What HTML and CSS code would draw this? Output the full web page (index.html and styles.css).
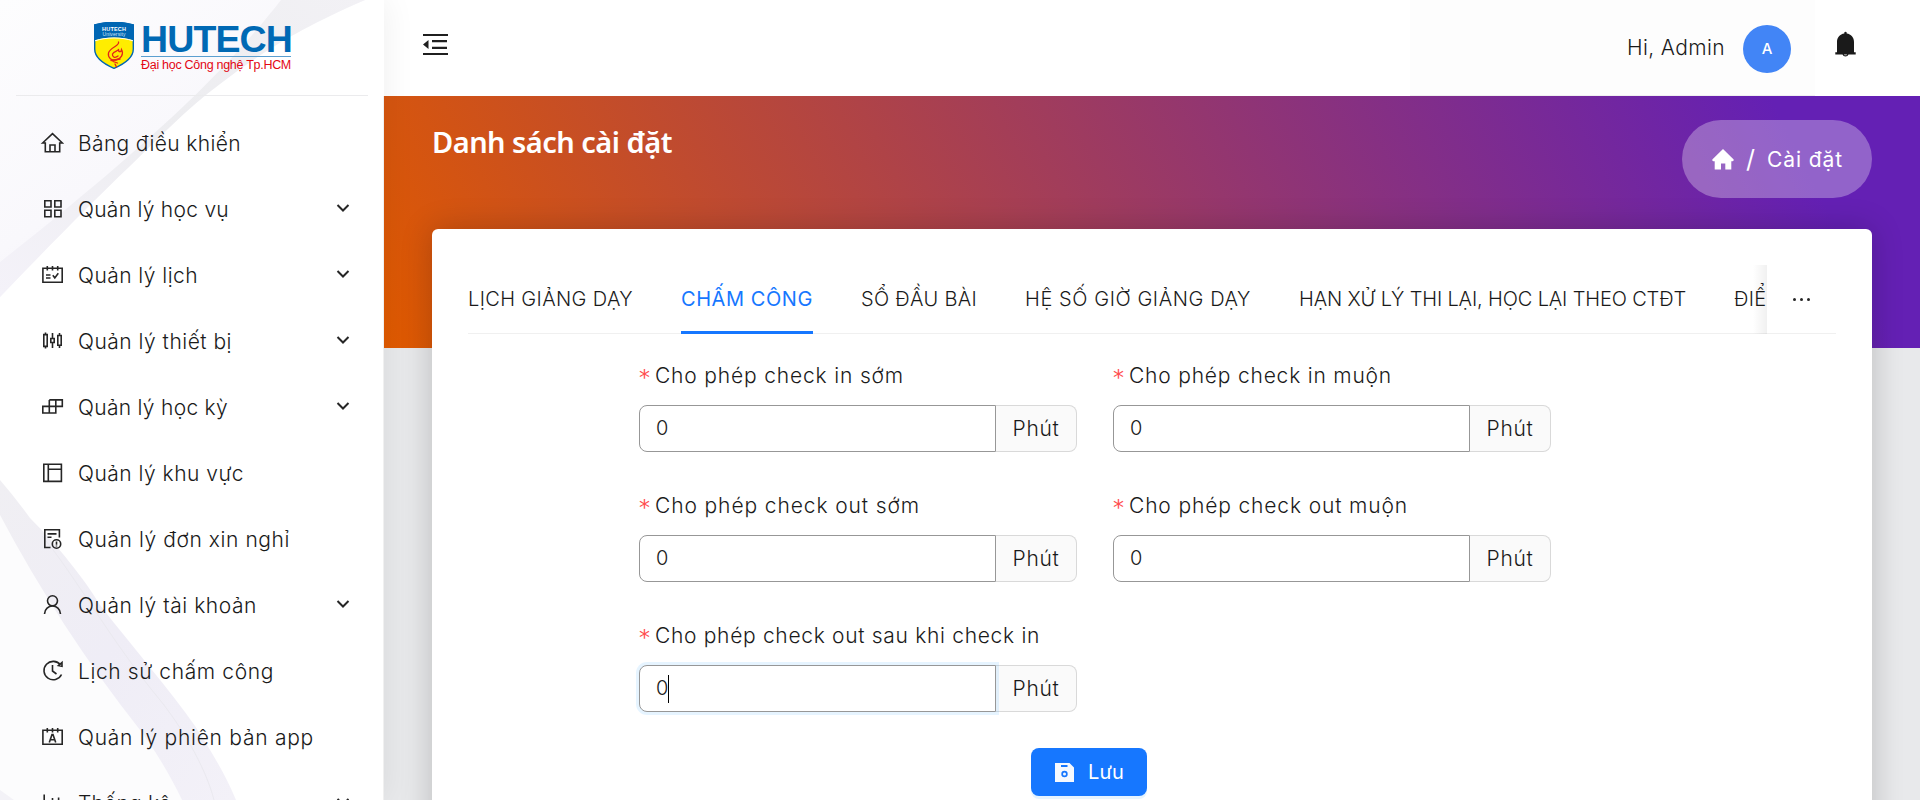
FILE: index.html
```html
<!DOCTYPE html>
<html lang="vi">
<head>
<meta charset="utf-8">
<title>Danh sách cài đặt</title>
<link rel="stylesheet" href="styles.css">
</head>
<body>
<div class="app">
  <aside class="sidebar">
    <svg class="swoosh" viewBox="0 0 384 800" width="384" height="800">
      <defs>
        <linearGradient id="g1" x1="0" y1="0" x2="0.7" y2="0.8">
          <stop offset="0" stop-color="#fdfdfe"/><stop offset=".6" stop-color="#f9f8fc"/><stop offset="1" stop-color="#f0eef6"/>
        </linearGradient>
        <linearGradient id="g2" x1="0" y1="0" x2="1" y2="1">
          <stop offset="0" stop-color="#f0eff3"/><stop offset=".5" stop-color="#efedf6"/><stop offset="1" stop-color="#f3f1f8"/>
        </linearGradient>
        <linearGradient id="g3" x1="1" y1="0" x2="0" y2="1">
          <stop offset="0" stop-color="#f2f1f5"/><stop offset=".45" stop-color="#ededf0"/><stop offset="1" stop-color="#f4f2f9"/>
        </linearGradient>
      </defs>
      <path fill="url(#g1)" d="M0 0H365C300 28 262 52 220 84C185 110 160 137 130 166C90 204 50 245 0 297Z"/>
      <path fill="url(#g3)" d="M281 0H365C300 28 262 52 220 84C185 110 160 137 130 166C90 204 50 245 0 297V262C60 215 120 165 160 128C205 88 250 40 281 0Z"/>
      <path fill="#fcfcfd" d="M0 515C35 575 70 640 140 730C155 750 170 775 182 800H0Z"/>
      <path fill="url(#g2)" d="M0 480C10 492 20 504 30 518C60 548 85 580 100 605C135 650 170 690 195 726C212 752 226 776 236 800H182C170 775 155 750 140 730C85 660 40 590 0 515Z"/>
      <path fill="none" stroke="#eae9ef" d="M42 536C75 575 110 640 160 700C180 725 205 765 214 800"/>
      <path fill="#f3f2f7" d="M0 790L14 800H0Z"/>
    </svg>
    <div class="brand">
      <svg class="shield" viewBox="0 0 40 47" width="40" height="47">
        <path d="M.7 3C12-.6 28-.6 39.300 3V27C39.300 37 29 42.500 20 46.300C11 42.500.7 37 .7 27Z" fill="#ffed00" stroke="#0066b3" stroke-width="1.400"/>
        <path d="M0 2.500C12-.8 28-.8 40 2.500V18.500C28 14.500 12 14.500 0 18.500Z" fill="#0066b3"/>
        <path d="M1 18.800C12 15 28 15 39 18.800" fill="none" stroke="#fff" stroke-width="1"/>
        <g fill="none" stroke="#e2231a" stroke-width="1.300" stroke-linecap="round"><path d="M24.500 20C26 24 16 25 14.500 31C13.500 36 18 39 22 38C27 37 30 32 27.500 27.500C27 31 24 30 24.500 27C25 29 20 29 18.500 32C18 35 21 36.500 24 34"/><path d="M17 38.500L26 37M19 39.500L23.500 41M21 42L22.500 45"/></g>
        <text x="20" y="8.600" text-anchor="middle" textLength="24" class="sh1">HUTECH</text>
        <text x="20" y="13.800" text-anchor="middle" textLength="23" class="sh2">University</text>
      </svg>
      <div class="brandtext"><span class="bname" data-w="151">HUTECH</span><span class="bsub" data-w="150">Đại học Công nghệ Tp.HCM</span></div>
    </div>
    <nav class="menu">
      <a class="item"><svg class="ic"><path d="M2.600 12L12.500 2.600L22.400 12H19.700V20.700H5.300V12Z M10 20.700V14H15V20.700"/></svg><span data-w="163">Bảng điều khiển</span></a>
      <a class="item"><svg class="ic"><path d="M4.800 3.800H11V10H4.800ZM14.800 3.800H21V10H14.800ZM4.800 13.300H11V19.700H4.800ZM14.800 13.300H21V19.700H14.800Z"/></svg><span data-w="151">Quản lý học vụ</span><svg class="chev"><path d="M1.500 2L7 7.500L12.500 2"/></svg></a>
      <a class="item"><svg class="ic"><path d="M2.900 5.300H22.200V19.200H2.900ZM7.300 3V7.500M12.500 3V7.500M17.700 3V7.500M6 12H10.500M6 15H10.500M12.800 12.300L14.800 15L18.300 10.300"/></svg><span data-w="120">Quản lý lịch</span><svg class="chev"><path d="M1.500 2L7 7.500L12.500 2"/></svg></a>
      <a class="item"><svg class="ic"><path d="M3.800 5.600H7.200V17.400H3.800ZM5.500 3.400V5.600M5.500 17.400V19.600M12.500 4V9.500M12.500 13.500V19M10.800 9.500H14.200V13.500H10.800ZM17.800 6.500H21.200V16.300H17.800ZM19.500 4V6.500M19.500 16.300V19"/></svg><span data-w="154">Quản lý thiết bị</span><svg class="chev"><path d="M1.500 2L7 7.500L12.500 2"/></svg></a>
      <a class="item"><svg class="ic"><path d="M9.300 4.900H22.300V11.400H2.800V18H15.800V4.900M9.300 4.900V18"/></svg><span data-w="150">Quản lý học kỳ</span><svg class="chev"><path d="M1.500 2L7 7.500L12.500 2"/></svg></a>
      <a class="item"><svg class="ic"><path d="M3.800 3.200H21.400V20.400H3.800ZM8.300 3.200V20.400M8.300 8.300H21.400"/></svg><span data-w="166">Quản lý khu vực</span></a>
      <a class="item"><svg class="ic"><path d="M10.500 20.500H4.800V2.700H19.400V10.500M7.500 6.900H16.500M7.500 10.300H11.500"/><circle cx="16.500" cy="17" r="4.200"/><path d="M16.500 14.500V17.800M16.500 18.500V19.500"/></svg><span data-w="212">Quản lý đơn xin nghỉ</span></a>
      <a class="item"><svg class="ic"><circle cx="12.500" cy="7.800" r="5"/><path d="M4.500 21C4.700 16 8.500 13 12.500 13S20.300 16 20.500 21"/></svg><span data-w="179">Quản lý tài khoản</span><svg class="chev"><path d="M1.500 2L7 7.500L12.500 2"/></svg></a>
      <a class="item"><svg class="ic"><path d="M21.500 15.500A9.200 9.200 0 1 1 20.500 6M12.500 6V12L16.500 15M22 3.500V7.200L18.500 6.500Z"/></svg><span data-w="196">Lịch sử chấm công</span></a>
      <a class="item"><svg class="ic"><path d="M2.900 5.300H22.200V19.200H2.900ZM7.300 3V7.500M12.500 3V7.500M17.700 3V7.500M9.300 17.500L12 9.500H13L15.700 17.500M10.300 14.700H14.700"/></svg><span data-w="236">Quản lý phiên bản app</span></a>
      <a class="item"><svg class="ic"><path d="M4.200 3.500V21H22M8.500 17V12M12.500 17V7M15.500 17V9M18.600 17V6.500"/></svg><span data-w="93">Thống kê</span><svg class="chev"><path d="M1.500 2L7 7.500L12.500 2"/></svg></a>
    </nav>
  </aside>
  <div class="main">
    <header class="header">
      <svg class="fold" viewBox="0 0 25 22" width="25" height="22"><path d="M0 0H25V2H0ZM9 6H24V8.200H9ZM9 12.800H24V15H9ZM0 19H25V21H0ZM0 10.500L5.500 6V15Z"/></svg>
      <div class="user"><span class="hi" data-w="98">Hi, Admin</span><span class="avatar">A</span></div>
      <svg class="bell" viewBox="0 0 21 27" width="21" height="27"><path d="M9.300 1.500A1.300 1.300 0 0 1 11.700 1.500V2.600C16 3.200 19 6.500 19 11V21.200H20.700V23.500H13.500A3.200 3.200 0 0 1 7.500 23.500H.3V21.200H2V11C2 6.500 5 3.200 9.300 2.600Z"/><path d="M8.900 23.500A1.800 1.600 0 0 0 12.100 23.500Z" fill="#fff"/></svg>
    </header>
    <section class="band">
      <h1 class="title" data-w="240">Danh sách cài đặt</h1>
      <div class="crumb"><svg viewBox="0 0 22 21" width="22" height="21"><path d="M11 0L21.700 10.600Q22 12 20.500 12.300H19.300V20.500H13.300V14.500H9V20.500H2.700V12.300H1.300Q0 12 .3 10.600Z"/></svg><span class="slash">/</span><span class="here" data-w="76">Cài đặt</span></div>
    </section>
    <section class="card">
      <div class="tabs">
        <div class="tablist">
          <span class="tab" data-w="165">LỊCH GIẢNG DẠY</span>
          <span class="tab on" data-w="132">CHẤM CÔNG</span>
          <span class="tab" data-w="116">SỔ ĐẦU BÀI</span>
          <span class="tab" data-w="226">HỆ SỐ GIỜ GIẢNG DẠY</span>
          <span class="tab" data-w="387">HẠN XỬ LÝ THI LẠI, HỌC LẠI THEO CTĐT</span>
          <span class="tab" data-w="51">ĐIỂM</span>
        </div>
        <div class="more"><i></i><i></i><i></i></div>
      </div>
      <div class="form">
        <div class="field"><label><b>*</b><span data-w="249">Cho phép check in sớm</span></label><div class="group"><div class="input">0</div><div class="addon"><span data-w="47">Phút</span></div></div></div>
        <div class="field"><label><b>*</b><span data-w="263">Cho phép check in muộn</span></label><div class="group"><div class="input">0</div><div class="addon"><span data-w="47">Phút</span></div></div></div>
        <div class="field"><label><b>*</b><span data-w="265">Cho phép check out sớm</span></label><div class="group"><div class="input">0</div><div class="addon"><span data-w="47">Phút</span></div></div></div>
        <div class="field"><label><b>*</b><span data-w="279">Cho phép check out muộn</span></label><div class="group"><div class="input">0</div><div class="addon"><span data-w="47">Phút</span></div></div></div>
        <div class="field"><label><b>*</b><span data-w="385">Cho phép check out sau khi check in</span></label><div class="group"><div class="input focus">0<i class="caret"></i></div><div class="addon"><span data-w="47">Phút</span></div></div></div>
      </div>
      <div class="actions"><button class="save"><svg viewBox="0 0 19 19" width="19" height="19"><path fill-rule="evenodd" d="M0 0H14.500L19 4.500V19H0ZM6 2V4H12.500V2ZM9.500 7.800A3.200 3.200 0 1 0 9.500 14.200A3.200 3.200 0 1 0 9.500 7.800ZM9.500 9.500A1.500 1.500 0 1 1 9.500 12.500A1.500 1.500 0 1 1 9.500 9.500Z"/></svg><span data-w="36">Lưu</span></button></div>
    </section>
  </div>
</div>
<script src="fit.js"></script>
</body>
</html>
```
FILE: styles.css
```css
* { box-sizing: border-box; }
body { margin: 0; font-family: Inter, "Noto Sans", sans-serif; font-weight: 350; font-size: 21px; color: #1a1a1a; background: #e8e9eb; overflow: hidden; }
[data-w] { white-space: nowrap; }
.app { display: flex; height: 800px; overflow: hidden; }
.sidebar { position: relative; z-index: 2; flex: none; width: 384px; background: #fff; box-shadow: 0 0 32px rgba(0,0,0,.07); }
.swoosh { position: absolute; left: 0; top: 0; }
.brand { position: relative; display: flex; align-items: flex-start; height: 96px; margin: 0 16px; padding: 22px 0 0 78px; border-bottom: 1px solid #ebebed; }
.brandtext { margin-left: 7px; display: flex; flex-direction: column; align-items: flex-start; font-family: "Liberation Sans", sans-serif; }
.bname { font-size: 37.500px; font-weight: 700; line-height: 34px; color: #0069b4; }
.bsub { font-size: 12.500px; line-height: 14px; font-weight: 400; color: #e30613; border-top: 1px solid #5b9fd0; padding-top: 1px; }
.sh1 { font: 700 5.500px "Liberation Sans", sans-serif; fill: #fff; }
.sh2 { font: 400 5px "Liberation Sans", sans-serif; fill: #cfe4f5; }
.menu { position: relative; padding-top: 14px; border-right: 1px solid #f0f0f0; }
.item { display: flex; align-items: center; height: 66px; padding: 0 33px 0 40px; }
.ic { width: 24px; height: 24px; flex: none; margin-right: 14px; fill: none; stroke: #262626; stroke-width: 1.600; }
.chev { width: 14px; height: 10px; margin-left: auto; fill: none; stroke: #262626; stroke-width: 2; margin-top: -2px; }
.main { flex: 1; min-width: 0; }
.header { height: 96px; background: #fff; display: flex; align-items: flex-start; padding-left: 39px; }
.fold { margin-top: 34px; fill: #1f1f1f; }
.user { margin-left: auto; display: flex; align-items: center; height: 96px; width: 405px; justify-content: flex-end; padding-right: 24px; padding-top: 2px; background: #fdfdfd; border-bottom: 1px solid #f0f0f0; }
.hi { margin-top: -3px; }
.avatar { width: 48px; height: 48px; margin-left: 18px; border-radius: 50%; background: #4285f6; color: #fff; font-size: 15px; font-weight: 500; display: flex; align-items: center; justify-content: center; }
.bell { margin: 31px 64px 0 20px; fill: #1a1a1a; }
.band { height: 252px; padding: 24px 48px 0; display: flex; justify-content: space-between; align-items: flex-start; background: linear-gradient(63deg, #e05a00 0%, #6420b4 91%); }
.title { margin: 0; font: 600 29px/44px "Noto Sans", sans-serif; color: #fff; }
.crumb { width: 190px; height: 78px; border-radius: 39px; background: rgba(255,255,255,.3); display: flex; align-items: center; padding-left: 30px; color: #fff; font-weight: 400; }
.crumb svg { fill: #fff; }
.slash { font-size: 25px; margin: 0 12px 0 12px; width: 9px; text-align: center; }
.card { position: relative; margin: -119px 48px 0; height: 640px; background: #fff; border-radius: 6px; padding: 36px; box-shadow: 0 0 32px rgba(0,0,0,.2); }
.tabs { display: flex; height: 69px; border-bottom: 1px solid #f0f0f0; }
.tablist { position: relative; width: 1299px; height: 69px; display: flex; gap: 48px; overflow: hidden; font-size: 20px; }
.tablist::after { content: ""; position: absolute; right: 0; top: 0; width: 14px; height: 69px; background: linear-gradient(90deg, transparent, rgba(0,0,0,.06)); }
.tab { flex: none; line-height: 69px; height: 69px; }
.tab.on { color: #1677ff; font-weight: 400; border-bottom: 3px solid #1677ff; }
.more { display: flex; gap: 4px; align-items: center; padding: 0 0 0 26px; }
.more i { width: 3px; height: 3px; border-radius: 50%; background: #262626; }
.form { width: 912px; margin: 24px 0 0 171px; display: grid; grid-template-columns: 438px 438px; column-gap: 36px; }
.field { height: 130px; }
.field label { display: flex; align-items: center; height: 35px; }
.field label b { font: 400 22px/20px "DejaVu Sans", sans-serif; color: #ff4d4f; width: 10px; margin-right: 6px; padding-top: 4px; }
.group { display: flex; height: 47px; margin-top: 12px; }
.input { width: 357px; border: 1px solid #979797; border-radius: 8px 0 0 8px; background: #fff; padding-left: 16px; line-height: 47px; display: flex; align-items: center; position: relative; z-index: 1; font-size: 20px; }
.focus { box-shadow: 0 0 0 3px rgba(5,145,255,.1); }
.caret { width: 1px; height: 28px; background: #000; }
.addon { width: 81px; border: 1px solid #d9d9d9; border-left: 0; border-radius: 0 8px 8px 0; background: #fafafa; display: flex; align-items: center; justify-content: center; }
.actions { display: flex; margin: 0 0 0 563px; }
.save { width: 116px; height: 48px; border: 0; border-radius: 8px; background: #1677ff; color: #fff; font: 400 20px Inter, sans-serif; display: flex; align-items: center; padding: 0 0 0 24px; gap: 14px; box-shadow: 0 3px 0 rgba(5,145,255,.1); }
.save svg { fill: #f5f9ff; }
```
FILE: fit.js
```js
document.querySelectorAll('[data-w]').forEach(function (el) {
  var range = document.createRange();
  range.selectNodeContents(el);
  var width = range.getBoundingClientRect().width;
  var target = Number(el.dataset.w);
  el.style.letterSpacing = ((target - width) / el.textContent.length).toFixed(3) + 'px';
});
```
